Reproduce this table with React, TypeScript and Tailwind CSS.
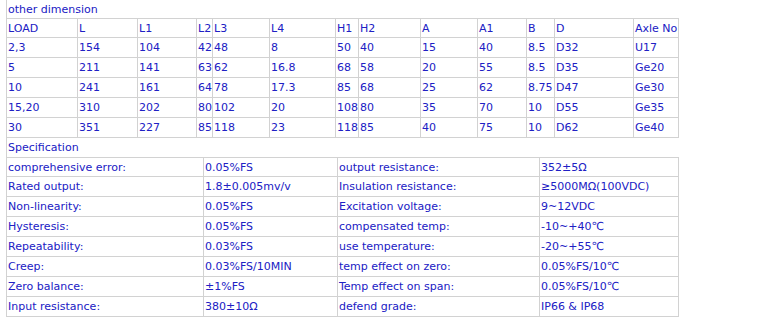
import React from 'react';

const dimCols = [71, 60, 59, 16, 57, 66, 23, 62, 57, 49, 28, 79, 45];

const dimHeader = ['LOAD', 'L', 'L1', 'L2', 'L3', 'L4', 'H1', 'H2', 'A', 'A1', 'B', 'D', 'Axle No'];

const dimRows = [
  ['2,3', '154', '104', '42', '48', '8', '50', '40', '15', '40', '8.5', 'D32', 'U17'],
  ['5', '211', '141', '63', '62', '16.8', '68', '58', '20', '55', '8.5', 'D35', 'Ge20'],
  ['10', '241', '161', '64', '78', '17.3', '85', '68', '25', '62', '8.75', 'D47', 'Ge30'],
  ['15,20', '310', '202', '80', '102', '20', '108', '80', '35', '70', '10', 'D55', 'Ge35'],
  ['30', '351', '227', '85', '118', '23', '118', '85', '40', '75', '10', 'D62', 'Ge40'],
];

const specCols = [197, 134, 202, 139];

const specRows = [
  ['comprehensive error:', '0.05%FS', 'output resistance:', '352±5Ω'],
  ['Rated output:', '1.8±0.005mv/v', 'Insulation resistance:', '≥5000MΩ(100VDC)'],
  ['Non-linearity:', '0.05%FS', 'Excitation voltage:', '9~12VDC'],
  ['Hysteresis:', '0.05%FS', 'compensated temp:', '-10~+40℃'],
  ['Repeatability:', '0.03%FS', 'use temperature:', '-20~+55℃'],
  ['Creep:', '0.03%FS/10MIN', 'temp effect on zero:', '0.05%FS/10℃'],
  ['Zero balance:', '±1%FS', 'Temp effect on span:', '0.05%FS/10℃'],
  ['Input resistance:', '380±10Ω', 'defend grade:', 'IP66 & IP68'],
];

const cell = 'border border-[#d2d2d2] px-[1px] py-0 text-left align-middle whitespace-nowrap overflow-hidden';

export default function App() {
  return (
    <div className="min-h-[326px] bg-white text-[11px] leading-[13px] text-[#2020c4] [font-family:'DejaVu_Sans',Verdana,sans-serif]">
      <div className="ml-[6px] w-[672px]">
        <div className="flex h-[18px] items-center border-l border-[#d2d2d2] px-[1px]">other dimension</div>
        <table className="w-[673px] table-fixed border-collapse">
          <colgroup>
            {dimCols.map((w, i) => (
              <col key={i} style={{ width: w }} />
            ))}
          </colgroup>
          <tbody>
            <tr className="h-[19px]">
              {dimHeader.map((h, i) => (
                <td key={i} className={cell}>{h}</td>
              ))}
            </tr>
            {dimRows.map((row, r) => (
              <tr key={r} className="h-[20px]">
                {row.map((v, i) => (
                  <td key={i} className={cell}>{v}</td>
                ))}
              </tr>
            ))}
          </tbody>
        </table>
        <div className="flex h-[19px] items-center border-l border-[#d2d2d2] px-[1px]">Specification</div>
        <table className="w-[673px] table-fixed border-collapse">
          <colgroup>
            {specCols.map((w, i) => (
              <col key={i} style={{ width: w }} />
            ))}
          </colgroup>
          <tbody>
            {specRows.map((row, r) => (
              <tr key={r} className={r === 0 ? 'h-[19px]' : 'h-[20px]'}>
                {row.map((v, i) => (
                  <td key={i} className={cell}>{v}</td>
                ))}
              </tr>
            ))}
          </tbody>
        </table>
      </div>
    </div>
  );
}
